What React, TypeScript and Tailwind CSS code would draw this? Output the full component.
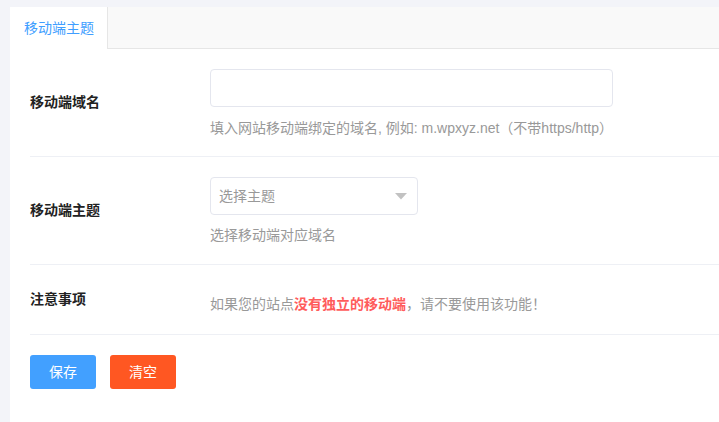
import React from "react";

const font = { fontFamily: '"Liberation Sans", "Noto Sans CJK SC", sans-serif' };

export default function App() {
  return (
    <div
      className="w-[719px] h-[422px] overflow-hidden bg-[#f3f4f9] pt-[7px] pl-[10px]"
      style={font}
    >
      <div className="bg-white w-[740px] h-[430px]">
        {/* tabs */}
        <div className="flex h-[42px] bg-[#f9f9f9] border-b border-[#e6e6e6]">
          <div className="w-[98px] h-[42px] bg-white border-r border-[#e6e6e6] flex items-center pl-[14px] text-[14px] text-[#409eff]">
            移动端主题
          </div>
        </div>

        <div className="pl-[20px]">
          {/* row 1 */}
          <div className="flex items-center border-b border-[#eef0f5]">
            <div className="w-[180px] text-[14px] font-bold text-[#222]">移动端域名</div>
            <div className="pt-[20px] pb-[18px]">
              <div className="w-[403px] h-[38px] border border-[#e4e6ee] rounded-[4px]" />
              <div className="mt-[11px] leading-[20px] text-[14px] text-[#999]">
                填入网站移动端绑定的域名, 例如: m.wpxyz.net（不带https/http）
              </div>
            </div>
          </div>

          {/* row 2 */}
          <div className="flex items-center border-b border-[#eef0f5]">
            <div className="w-[180px] text-[14px] font-bold text-[#222]">移动端主题</div>
            <div className="pt-[20px] pb-[19px]">
              <div className="w-[208px] h-[38px] border border-[#e4e6ee] rounded-[4px] flex items-center justify-between pl-[8px] pr-[10px]">
                <span className="text-[14px] text-[#999]">选择主题</span>
                <svg width="12" height="7" viewBox="0 0 12 7">
                  <path d="M0 0 L12 0 L6 6.5 Z" fill="#c2c2c2" />
                </svg>
              </div>
              <div className="mt-[10px] leading-[20px] text-[14px] text-[#999]">选择移动端对应域名</div>
            </div>
          </div>

          {/* row 3 */}
          <div className="flex items-center border-b border-[#eef0f5]">
            <div className="w-[180px] text-[14px] font-bold text-[#222]">注意事项</div>
            <div className="pt-[29px] pb-[20px] leading-[20px] text-[14px] text-[#999]">
              如果您的站点<span className="text-[#ff5c5c] font-bold">没有独立的移动端</span>，请不要使用该功能！
            </div>
          </div>

          {/* buttons */}
          <div className="flex gap-[14px] mt-[20px]">
            <button className="w-[66px] h-[34px] rounded-[3px] bg-[#42a0ff] text-white text-[14px]">保存</button>
            <button className="w-[66px] h-[34px] rounded-[3px] bg-[#ff5722] text-white text-[14px]">清空</button>
          </div>
        </div>
      </div>
    </div>
  );
}
